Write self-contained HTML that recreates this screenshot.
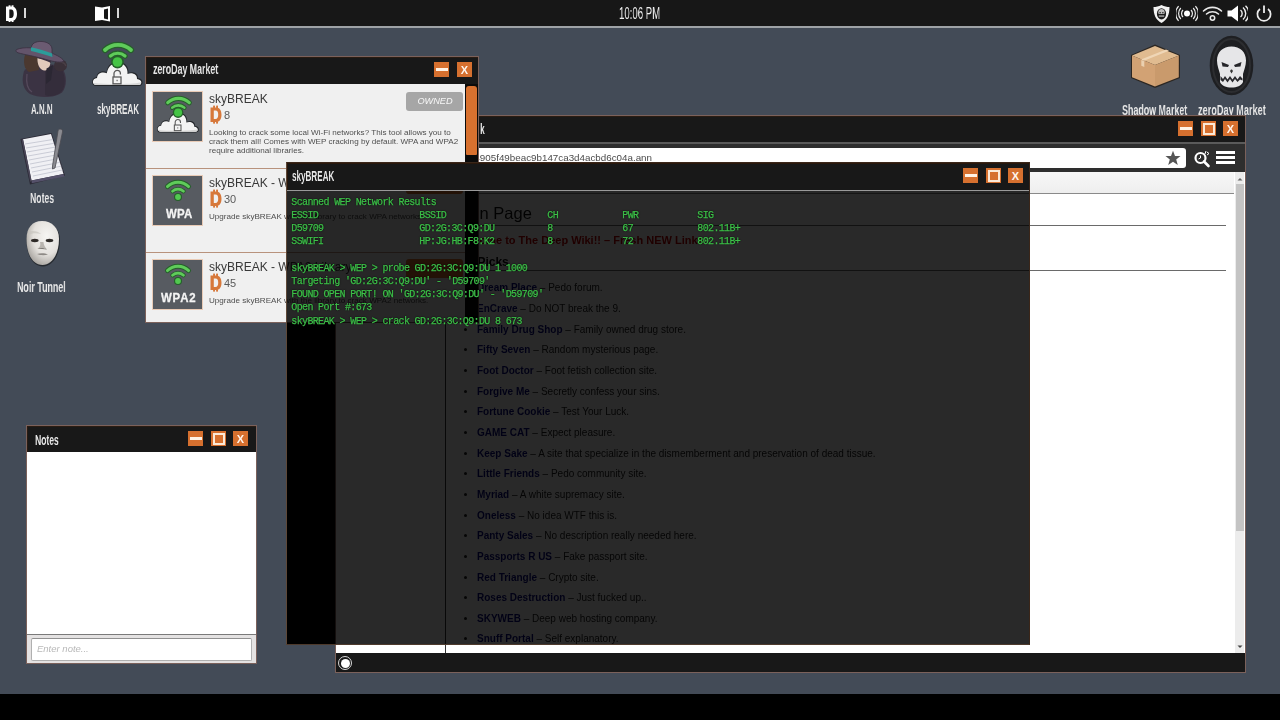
<!DOCTYPE html>
<html><head><meta charset="utf-8">
<style>
*,*::before,*::after{margin:0;padding:0;box-sizing:border-box}
html,body{width:1280px;height:720px;overflow:hidden;background:#000;font-family:"Liberation Sans",sans-serif}
.a{position:absolute}
#desk{position:absolute;left:0;top:28px;width:1280px;height:666px;background:#434b57}
#top{position:absolute;left:0;top:0;width:1280px;height:26px;background:#171717}
#topline{position:absolute;left:0;top:26px;width:1280px;height:2px;background:#9ea2a6}
.cd{position:absolute;white-space:nowrap;transform-origin:0 0;will-change:transform;color:#e8e8e8;line-height:1;font-weight:bold}
.win{position:absolute;border:1px solid #7b615b;background:#181818}
.tb{position:absolute;left:0;top:0;right:0;background:#181818;box-shadow:inset 0 1px 0 #2a1c12,inset 1px 0 0 #2a1c12}
.btn{position:absolute;width:15px;height:15px;background:#d6702f}
.btn.min::after{content:"";position:absolute;left:1.5px;top:6px;width:12px;height:3px;background:#fff3e6}
.btn.max::after{content:"";position:absolute;left:1.5px;top:1.5px;width:12px;height:12px;border:2px solid #fbe9d8}
.btn.cls::after{content:"X";position:absolute;left:0;top:1.5px;width:15px;text-align:center;font:bold 11px/13px "Liberation Sans",sans-serif;color:#fff6ee}

.zi{position:absolute;left:0;width:319px;height:85px;border-bottom:1px solid #b8927c}
.ibox{position:absolute;left:7px;top:8px;width:49px;height:49px;background:#575b61;box-shadow:0 0 0 1px #e9cbb6}
.ititle{position:absolute;left:63px;top:8px;font-size:12px;line-height:14px;color:#383838;white-space:nowrap}
.iprice{position:absolute;left:78px;top:23.5px;font-size:11px;line-height:14px;color:#5a5a5a}
.idesc{position:absolute;left:63px;top:44px;width:260px;font-size:8.1px;line-height:9px;color:#4e4e4e}
.bbtn{position:absolute;left:260px;top:7px;width:57px;height:19px;border-radius:3px;background:#d8712f}

.li{position:absolute;left:141px;font-size:10px;line-height:12px;color:#222;white-space:nowrap}
.li b{color:#0b0b80}
.li::before{content:"";position:absolute;left:-13px;top:4px;width:3px;height:3px;border-radius:2px;background:#222}
.tl{position:absolute;font:10px/12px "Liberation Mono",monospace;letter-spacing:-0.64px;color:#3ec04a;-webkit-text-stroke:0.25px #3ec04a;text-shadow:0 0 1.5px #000,0 0 1px #000;white-space:pre}
.win{will-change:transform}</style></head><body>
<div id="desk"></div>
<div id="top"></div>
<div id="topline"></div>

<!-- TOP BAR -->
<svg class="a" style="left:0;top:0" width="22" height="26" viewBox="0 0 22 26">
 <path d="M6 6.5 H11.5 C15 6.5 17 9.3 17 13.7 C17 18.1 15 21 11.5 21 H6 Z M9.3 9.6 V17.9 H11 C12.9 17.9 13.7 16.3 13.7 13.7 C13.7 11.1 12.9 9.6 11 9.6 Z" fill="#fff" fill-rule="evenodd"/>
 <rect x="8.6" y="5.3" width="1.9" height="1.8" fill="#fff"/><rect x="11.6" y="5.3" width="1.9" height="1.8" fill="#fff"/>
 <rect x="8.6" y="20.4" width="1.9" height="1.6" fill="#fff"/><rect x="11.6" y="20.4" width="1.9" height="1.6" fill="#fff"/>
</svg>
<div class="a" style="left:24px;top:8px;width:1.6px;height:10px;background:#d8d8d8"></div>
<svg class="a" style="left:95px;top:5px" width="16" height="17" viewBox="0 0 16 17">
 <path d="M0 1.5 L7 2.5 L7 15 L0 16z" fill="#fff"/>
 <path d="M7 2.5 L15 1 L15 16.5 L7 15z M9 4.5v9l4 1V3.5z" fill="#fff" fill-rule="evenodd"/>
</svg>
<div class="a" style="left:117px;top:8px;width:1.6px;height:10px;background:#d8d8d8"></div>
<div class="cd" style="left:619px;top:6px;font-size:16px;font-weight:normal;transform:scaleX(.6);color:#f0f0f0">10:06 PM</div>
<!-- right tray -->
<svg class="a" style="left:1152px;top:4px" width="19" height="20" viewBox="0 0 19 20">
 <path d="M9.5 1 C12.5 2.5 15 3 17.5 3 C17.5 11 15 16 9.5 19 C4 16 1.5 11 1.5 3 C4 3 6.5 2.5 9.5 1z" fill="#f2f2f2"/>
 <ellipse cx="9.5" cy="9.8" rx="4.6" ry="5.6" fill="#1c1c1c"/>
 <path d="M6.3 8.2 C6.3 6 7.7 4.9 9.5 4.9 C11.3 4.9 12.7 6 12.7 8.2 L12.4 10 L6.6 10z" fill="#bdbdbd"/>
 <rect x="6.8" y="11.3" width="5.4" height="1.6" fill="#9a9a9a"/>
 <rect x="7.4" y="8.2" width="1.5" height="1.1" fill="#222"/><rect x="10.1" y="8.2" width="1.5" height="1.1" fill="#222"/>
</svg>
<svg class="a" style="left:1176px;top:5px" width="22" height="17" viewBox="0 0 22 17">
 <circle cx="11" cy="8.5" r="3" fill="#fff"/>
 <g fill="none" stroke="#ececec" stroke-width="1.2">
 <path d="M7 5 A5 5 0 0 0 7 12"/><path d="M15 5 A5 5 0 0 1 15 12"/>
 <path d="M4.8 3 A8 8 0 0 0 4.8 14"/><path d="M17.2 3 A8 8 0 0 1 17.2 14"/>
 <path d="M2.6 1.2 A10.5 10.5 0 0 0 2.6 15.8"/><path d="M19.4 1.2 A10.5 10.5 0 0 1 19.4 15.8"/>
 </g>
</svg>
<svg class="a" style="left:1202px;top:6px" width="21" height="15" viewBox="0 0 21 15">
 <g fill="none" stroke="#e8e8e8" stroke-width="1.6" stroke-linecap="round">
 <path d="M1.5 5 A13 13 0 0 1 19.5 5"/><path d="M4.5 8 A9 9 0 0 1 16.5 8"/>
 </g>
 <circle cx="10.5" cy="12" r="2.2" fill="none" stroke="#e8e8e8" stroke-width="1.5"/>
</svg>
<svg class="a" style="left:1227px;top:5px" width="21" height="17" viewBox="0 0 21 17">
 <path d="M0.5 5.5h4L11 0.5v16L4.5 11.5h-4z" fill="#fff"/>
 <g fill="none" stroke="#f0f0f0" stroke-width="1.4">
 <path d="M13.5 5 A4.5 4.5 0 0 1 13.5 12"/><path d="M16 2.5 A8 8 0 0 1 16 14.5"/><path d="M18.5 0.8 A10.5 10.5 0 0 1 18.5 16.2"/>
 </g>
</svg>
<svg class="a" style="left:1255px;top:5px" width="18" height="17" viewBox="0 0 18 17">
 <path d="M5 4 A6.6 6.6 0 1 0 13 4" fill="none" stroke="#ececec" stroke-width="1.7"/>
 <rect x="8.1" y="0.5" width="1.8" height="7.5" fill="#ececec"/>
</svg>

<!-- DESKTOP ICONS -->
<svg width="0" height="0" style="position:absolute">
 <defs>
  <symbol id="wc" viewBox="0 0 64 56">
   <path d="M19 14 A19 19 0 0 1 45 14" fill="none" stroke="#25602a" stroke-width="6.2" stroke-linecap="round"/>
   <path d="M19 14 A19 19 0 0 1 45 14" fill="none" stroke="#5fcb5a" stroke-width="3.8" stroke-linecap="round"/>
   <path d="M24.5 20 A11 11 0 0 1 39 20" fill="none" stroke="#25602a" stroke-width="5.6" stroke-linecap="round"/>
   <path d="M24.5 20 A11 11 0 0 1 39 20" fill="none" stroke="#5fcb5a" stroke-width="3.2" stroke-linecap="round"/>
   <path d="M10 50 C5 50 4.5 42 10.5 41 C11 36 16.5 34 20.5 36 C21.5 28.5 27 25 32.5 25.5 C39 26 43 31 42.5 37 C46.5 35 52.5 37 52 42 C58 42.5 58 50 53 50 Z" fill="#25282c"/>
   <path d="M10 49 C6 49 5.5 42.5 11 42 C11.5 37 16.5 35.5 20.8 37.3 C22 30 27 26.5 32.5 27 C38.5 27.5 42 32 41.5 38 C45.5 36 51.5 38 51 43 C56.5 43.5 56.5 49 52.5 49 Z" fill="#f3f3f3"/>
   <path d="M8 47 C20 48.5 44 48.5 55 46.5 C55 48.5 54 49 52.5 49 L10 49 C8.5 49 8 48 8 47z" fill="#d4d4d4"/>
   <circle cx="31.5" cy="26" r="6.4" fill="#25602a"/><circle cx="31.5" cy="26" r="4.8" fill="#45c445"/>
   <path d="M28 41 v-3.4 a3.2 3.2 0 0 1 6.4 0 v1" fill="none" stroke="#5a5a5a" stroke-width="1.3"/>
   <rect x="27" y="41" width="8" height="6.8" fill="none" stroke="#5a5a5a" stroke-width="1.3"/>
   <rect x="30.5" y="43.8" width="1.2" height="1.4" fill="#666"/>
  </symbol>
 </defs>
</svg>
<svg class="a" style="left:10px;top:34px" width="64" height="64" viewBox="0 0 64 64">
 <path d="M14 37 C11 47 13 56 20 60 C29 64.5 45 64 52 58.5 C57.5 52 57 41 52 33.5 C45 28.5 21 29 14 37 Z" fill="#3b3343"/>
 <path d="M35 33 C43 31 51 32 53 38 C56 46 55 55 50 59 C45 62.5 38 62.5 35 61 Z" fill="#342d3b"/>
 <path d="M17 40 C16 48 17 55 22 58" fill="none" stroke="#554a5c" stroke-width="1.2"/>
 <path d="M15 21 C13 28 14 35 19 38 L29 36 L28 22 Z" fill="#4b382f"/>
 <path d="M27.5 24 C27 30 29.5 35.5 34 36.5 C37 37 39 34 40 31 L40.5 26 Z" fill="#e2cabb"/>
 <path d="M27 24 C32 25 37 27 41 29 L41 26 L28 22 Z" fill="#3a3040"/>
 <path d="M36.5 34.5 L43 31 L41 46 L36 50 Z" fill="#2b2733"/>
 <ellipse cx="50.5" cy="31.5" rx="6.5" ry="6" fill="#3a3038"/>
 <path d="M46 28 C50 27 55 28.5 56 32" fill="none" stroke="#4a3f46" stroke-width="1.5"/>
 <path d="M6.5 15.5 C14 12.5 26 13.5 36 17 C45 20 52 23.5 54 27 C52 29 44 28 36 25.5 C26 22.5 14 20.5 8 18.8 C6 18.2 5.5 16.5 6.5 15.5 Z" fill="#63546b" stroke="#3a3040" stroke-width="0.8"/>
 <path d="M21.5 14 C21 9.5 26 7 32 7.5 C38 8 42 11 42 15.5 L42 21.5 C35 19 28 17 21.5 15.5 Z" fill="#6b5b72" stroke="#3a3040" stroke-width="0.8"/>
 <path d="M21 13.2 C28 14.7 36 17 42.3 19.6 L42.3 23 C35 20.5 28 18.6 21 17 Z" fill="#2b9c9a"/>
</svg>
<svg class="a" style="left:86px;top:36px" width="64" height="56"><use href="#wc"/></svg>
<svg class="a" style="left:14px;top:124px" width="56" height="64" viewBox="0 0 56 64">
 <path d="M6.5 15 L37.5 9 L51 51.5 L16 60.5 Z" fill="#2a2834"/>
 <path d="M9 15.2 L37 10 L49.5 50 L17.5 56.5 Z" fill="#f0f0f4"/>
 <path d="M17.5 56.5 L49.5 50 L50.5 52.5 L17.8 59.2z" fill="#55516a"/>
 <path d="M7.5 15.5 L9 15.2 L17.5 56.5 L16.2 58z" fill="#4a4658"/>
 <g stroke="#b9bcc8" stroke-width="0.7">
  <path d="M11 20 L39 15.5"/><path d="M12 24 L40.2 19.3"/><path d="M13 28 L41.4 23.1"/><path d="M14 32 L42.6 26.9"/><path d="M15 36 L43.8 30.7"/><path d="M16 40 L45 34.5"/><path d="M17 44 L46.2 38.3"/><path d="M18 48 L47.4 42.1"/><path d="M19 52 L48.6 45.9"/>
 </g>
 <path d="M46 5 C48 5 49 6.5 48.5 8 L41 44 L38.5 45 L38.5 42 L44 7 C44.3 5.8 45 5 46 5z" fill="#8a8a90" stroke="#4a4a50" stroke-width="0.8"/>
</svg>
<svg class="a" style="left:18px;top:214px" width="48" height="58" viewBox="0 0 48 58">
 <defs><radialGradient id="mg" cx="0.62" cy="0.35" r="0.75"><stop offset="0" stop-color="#f6f5f3"/><stop offset="0.55" stop-color="#e4e1dd"/><stop offset="1" stop-color="#9c9893"/></radialGradient></defs>
 <path d="M24 7 C34 7 41.5 14 41.5 25 C41.5 40 34 51.5 24.5 51.5 C14 51.5 8 40 8 25 C8 14 14 7 24 7z" fill="#262a30" transform="translate(0.5,1)"/>
 <path d="M24 7 C34 7 41 14 41 25 C41 40 34 51 24.5 51 C14.5 51 8.5 40 8.5 25 C8.5 14 14 7 24 7z" fill="url(#mg)"/>
 <path d="M10 18 C14 16 20 17 23 20 C19 19 14 19 10 21z" fill="#c8c4bf" opacity="0.7"/>
 <ellipse cx="16.8" cy="26.5" rx="3.8" ry="1.7" fill="#2e2a28"/>
 <ellipse cx="31.5" cy="26.5" rx="3.8" ry="1.7" fill="#2e2a28"/>
 <path d="M22 28 C23 31 22 33 19.5 35 C23 34 26 34 29 35.5 C27 33 25.5 31 25.5 28z" fill="#b9b5b0"/>
 <path d="M19.5 35 C22 33.5 26 33.5 29 35.5 C26 35 22 35 19.5 35z" fill="#7e7a76"/>
 <path d="M19 40 C22 39 27 39 30 40.5 C27 41.5 22 41.5 19 40z" fill="#8e8a86"/>
</svg>
<svg class="a" style="left:1124px;top:32px" width="64" height="64" viewBox="0 0 64 64">
 <path d="M31 12.5 L56 23 L56 46 L31 56 L7 46 L7 23 Z" fill="#2b2622"/>
 <path d="M31 14 L54.8 23.6 L31 33 L8 23.6 Z" fill="#e0bb90"/>
 <path d="M8 23.6 L31 33 L31 54.5 L8 45.2 Z" fill="#d2a274"/>
 <path d="M31 33 L54.8 23.6 L54.8 45.2 L31 54.5 Z" fill="#c99a6c"/>
 <path d="M17 27.5 L42 17.5 L45 18.7 L20 28.7 Z" fill="#efd6b6"/>
 <path d="M17.3 28 L20.3 29.2 L20.3 35 L17.3 33.8 Z" fill="#ead0b0"/>
</svg>
<svg class="a" style="left:1202px;top:30px" width="60" height="70" viewBox="0 0 60 70">
 <ellipse cx="29.5" cy="35.5" rx="21.8" ry="29.8" fill="#1e1f22"/>
 <ellipse cx="29.5" cy="35.5" rx="18.5" ry="26.5" fill="none" stroke="#2c2d30" stroke-width="2"/>
 <path d="M29.5 16.5 C38 16.5 44 22 44 30.5 C44 36 42 40 41 44 L41 52 C39 56 35 57.5 29.5 57.5 C24 57.5 20 56 18 52 L18 44 C17 40 15 36 15 30.5 C15 22 21 16.5 29.5 16.5z" fill="#e6e6e8"/>
 <path d="M19.5 32 L27 35 L26 37 L20.5 36.5 Z" fill="#26262a"/>
 <path d="M39.5 32 L32 35 L33 37 L38.5 36.5 Z" fill="#26262a"/>
 <path d="M28 41 L29.5 43.5 L31 41 L30 39.5 L29 39.5z" fill="#333"/>
 <path d="M18.5 46 L21 49 L23 46 L25.5 49.5 L28 46 L30.5 49.5 L33 46 L35.5 49.5 L38 46 L40.5 48.5 L40.5 50.5 L38 49.5 L35.5 52 L33 49 L30.5 52.5 L28 49 L25.5 52.5 L23 49 L21 52 L18.5 50z" fill="#2a2a2e"/>
</svg>
<div class="cd" style="left:31px;top:101.5px;font-size:14px;transform:scaleX(.565)">A.N.N</div>
<div class="cd" style="left:97px;top:102px;font-size:14px;transform:scaleX(.575)">skyBREAK</div>
<div class="cd" style="left:29.5px;top:191px;font-size:14px;transform:scaleX(.62)">Notes</div>
<div class="cd" style="left:17px;top:279.5px;font-size:14px;transform:scaleX(.635)">Noir Tunnel</div>
<div class="cd" style="left:1122px;top:102.8px;font-size:14px;transform:scaleX(.635)">Shadow Market</div>
<div class="cd" style="left:1197.5px;top:102.8px;font-size:14px;transform:scaleX(.655)">zeroDay Market</div>

<!-- NOTES WINDOW -->
<div class="win" style="left:26px;top:425px;width:231px;height:239px">
  <div class="tb" style="height:26px"></div>
  <div class="cd" style="left:8px;top:6px;font-size:15px;transform:scaleX(.57)">Notes</div>
  <div class="btn min" style="left:161px;top:5px"></div>
  <div class="btn max" style="left:184px;top:5px"></div>
  <div class="btn cls" style="left:206px;top:5px"></div>
  <div class="a" style="left:0;top:26px;width:229px;height:182px;background:#fff"></div>
  <div class="a" style="left:0;top:208px;width:229px;height:29px;background:#e4e2e2;border-top:1px solid #7a7a7a"></div>
  <div class="a" style="left:4px;top:212px;width:221px;height:23px;background:#fff;border:1px solid #b0b0b0;border-top-color:#909090;border-radius:2px"></div>
  <div class="a" style="left:10px;top:217px;font-size:9.5px;line-height:12px;font-style:italic;color:#b8b8b8">Enter note...</div>
</div>


<!-- BROWSER WINDOW -->
<div class="win" style="left:335px;top:115px;width:911px;height:558px;overflow:hidden">
  <div class="tb" style="height:26px"></div>
  <div class="cd" style="left:144px;top:6px;font-size:14px;transform:scaleX(.6)">k</div>
  <div class="btn min" style="left:842px;top:5px"></div>
  <div class="btn max" style="left:865px;top:5px"></div>
  <div class="btn cls" style="left:887px;top:5px"></div>
  <div class="a" style="left:0;top:26px;width:909px;height:2px;background:#5a5a5a"></div>
  <div class="a" style="left:0;top:28px;width:909px;height:28px;background:#2e2e2e"></div>
  <div class="a" style="left:6px;top:32px;width:844px;height:20px;background:#fff;border-radius:3px"></div>
  <div class="a" style="left:0;top:35px;width:316px;overflow:hidden;text-align:right;font-size:9.8px;line-height:14px;color:#4a4a4a;white-space:nowrap">deepwiki.e8b3c2d1a7f6e4905f49beac9b147ca3d4acbd6c04a.ann</div>
  <svg class="a" style="left:829px;top:34px" width="16" height="16" viewBox="0 0 16 16"><path d="M8 0.8 L10 6 L15.5 6.1 L11.2 9.5 L12.8 15 L8 11.8 L3.2 15 L4.8 9.5 L0.5 6.1 L6 6z" fill="#555"/></svg>
  <svg class="a" style="left:857px;top:33px" width="19" height="19" viewBox="0 0 19 19">
   <circle cx="7.5" cy="9" r="5" fill="none" stroke="#fff" stroke-width="2.2"/>
   <path d="M11 12.5 L15.5 17" stroke="#fff" stroke-width="2.6" stroke-linecap="round"/>
   <path d="M7.5 6.5 V9 L5.5 10" fill="none" stroke="#fff" stroke-width="1"/>
   <path d="M13 2 L12 5 M14 3 L16 4.5 L14 6" fill="none" stroke="#fff" stroke-width="1"/>
  </svg>
  <div class="a" style="left:880px;top:35px;width:19px;height:3px;background:#fff"></div>
  <div class="a" style="left:880px;top:40px;width:19px;height:3px;background:#fff"></div>
  <div class="a" style="left:880px;top:45px;width:19px;height:3px;background:#fff"></div>
  <!-- page -->
  <div class="a" style="left:0;top:56px;width:909px;height:481px;background:#fff;overflow:hidden">
    <div class="a" style="left:0;top:0;width:898px;height:22px;background:linear-gradient(#f7f7f7,#eeeeee);border-bottom:1px solid #8a8a8a"></div>
    <div class="a" style="left:109px;top:23px;width:1px;height:460px;background:#333"></div>
    <div class="a" style="left:117px;top:32px;font-size:16.5px;line-height:18px;color:#111;white-space:nowrap">Main Page</div>
    <div class="a" style="left:120px;top:53px;width:770px;height:1px;background:#6a6a6a"></div>
    <div class="a" style="left:118px;top:61px;font-weight:bold;font-size:11px;line-height:14px;color:#c00000;white-space:nowrap">Welcome to The Deep Wiki!! – Fresh NEW Links</div>
    <div class="a" style="left:117px;top:83px;font-weight:bold;font-size:12px;line-height:14px;color:#111;white-space:nowrap">Top Picks</div>
    <div class="a" style="left:120px;top:98px;width:770px;height:1px;background:#6a6a6a"></div>
    <div class="li" style="top:110.4px"><b>Dream Place</b> – Pedo forum.</div>
<div class="li" style="top:131.0px"><b>EnCrave</b> – Do NOT break the 9.</div>
<div class="li" style="top:151.7px"><b>Family Drug Shop</b> – Family owned drug store.</div>
<div class="li" style="top:172.3px"><b>Fifty Seven</b> – Random mysterious page.</div>
<div class="li" style="top:192.9px"><b>Foot Doctor</b> – Foot fetish collection site.</div>
<div class="li" style="top:213.6px"><b>Forgive Me</b> – Secretly confess your sins.</div>
<div class="li" style="top:234.2px"><b>Fortune Cookie</b> – Test Your Luck.</div>
<div class="li" style="top:254.9px"><b>GAME CAT</b> – Expect pleasure.</div>
<div class="li" style="top:275.6px"><b>Keep Sake</b> – A site that specialize in the dismemberment and preservation of dead tissue.</div>
<div class="li" style="top:296.2px"><b>Little Friends</b> – Pedo community site.</div>
<div class="li" style="top:316.9px"><b>Myriad</b> – A white supremacy site.</div>
<div class="li" style="top:337.5px"><b>Oneless</b> – No idea WTF this is.</div>
<div class="li" style="top:358.1px"><b>Panty Sales</b> – No description really needed here.</div>
<div class="li" style="top:378.8px"><b>Passports R US</b> – Fake passport site.</div>
<div class="li" style="top:399.5px"><b>Red Triangle</b> – Crypto site.</div>
<div class="li" style="top:420.1px"><b>Roses Destruction</b> – Just fucked up..</div>
<div class="li" style="top:440.8px"><b>SKYWEB</b> – Deep web hosting company.</div>
<div class="li" style="top:461.4px"><b>Snuff Portal</b> – Self explanatory.</div>

    <div class="a" style="left:899px;top:0;width:9px;height:481px;background:#ececec"></div>
    <div class="a" style="left:900px;top:12px;width:8px;height:347px;background:#c4c4c4"></div>
    <svg class="a" style="left:900px;top:4px" width="8" height="6"><path d="M1.5 4.5 L4 2 L6.5 4.5" fill="#666"/></svg>
    <svg class="a" style="left:900px;top:472px" width="8" height="6"><path d="M1.5 1.5 L4 4 L6.5 1.5" fill="#444"/></svg>
  </div>
  <div class="a" style="left:0;top:537px;width:909px;height:19px;background:#181818"></div>
  <div class="a" style="left:2px;top:540px;width:14px;height:14px;border-radius:50%;border:1.5px solid #d8d8d8"></div>
  <div class="a" style="left:4.5px;top:542.5px;width:9px;height:9px;border-radius:50%;background:#fff"></div>
</div>

<!-- ZERODAY MARKET WINDOW -->
<div class="win" style="left:145px;top:56px;width:334px;height:267px;overflow:hidden">
  <div class="tb" style="height:27px"></div>
  <div class="cd" style="left:7px;top:5px;font-size:14px;transform:scaleX(.63)">zeroDay Market</div>
  <div class="btn min" style="left:288px;top:5px"></div>
  <div class="btn cls" style="left:311px;top:5px"></div>
  <div class="a" style="left:0;top:27px;width:319px;height:238px;background:#f0f0f0;overflow:hidden">
    <div class="zi" style="top:0">
      <div class="ibox"><svg class="a" style="left:-1px;top:-1px" width="53" height="46.5" viewBox="0 0 64 56"><use href="#wc"/></svg></div>
      <div class="ititle">skyBREAK</div>
      <svg class="a" style="left:63px;top:21px" width="14" height="19" viewBox="5 4 13 19"><path d="M6 6.5 H11.5 C15 6.5 17 9.3 17 13.7 C17 18.1 15 21 11.5 21 H6 Z M9.3 9.6 V17.9 H11 C12.9 17.9 13.7 16.3 13.7 13.7 C13.7 11.1 12.9 9.6 11 9.6 Z" fill="#d7783a" fill-rule="evenodd"/><rect x="8.6" y="4.6" width="1.9" height="2.5" fill="#d7783a"/><rect x="11.6" y="4.6" width="1.9" height="2.5" fill="#d7783a"/><rect x="8.6" y="20.4" width="1.9" height="2.2" fill="#d7783a"/><rect x="11.6" y="20.4" width="1.9" height="2.2" fill="#d7783a"/></svg>
      <div class="iprice">8</div>
      <div class="idesc">Looking to crack some local Wi-Fi networks? This tool allows you to crack them all! Comes with WEP cracking by default. WPA and WPA2 require additional libraries.</div>
      <div class="a" style="left:260px;top:7.5px;width:57px;height:19px;border-radius:3px;background:#a6a6a6;color:#f8f8f8;font:italic 9.2px/19px 'Liberation Sans',sans-serif;text-align:center;padding-left:1px">OWNED</div>
    </div>
    <div class="zi" style="top:84px">
      <div class="ibox"><svg class="a" style="left:0;top:0" width="50" height="50" viewBox="0 0 50 50">
<path d="M14.5 10.5 A15 15 0 0 1 35.5 10.5" fill="none" stroke="#25602a" stroke-width="5" stroke-linecap="round"/>
<path d="M14.5 10.5 A15 15 0 0 1 35.5 10.5" fill="none" stroke="#5fcb5a" stroke-width="3.1" stroke-linecap="round"/>
<path d="M19.5 15.2 A8.5 8.5 0 0 1 30.5 15.2" fill="none" stroke="#25602a" stroke-width="4.4" stroke-linecap="round"/>
<path d="M19.5 15.2 A8.5 8.5 0 0 1 30.5 15.2" fill="none" stroke="#5fcb5a" stroke-width="2.7" stroke-linecap="round"/>
<circle cx="25" cy="21" r="4" fill="#25602a"/><circle cx="25" cy="21" r="2.9" fill="#52c850"/>
</svg><div class="a" style="left:13px;top:31px;font:bold 13px/14px 'Liberation Sans',sans-serif;color:#f4f4f4;-webkit-text-stroke:0.3px #f4f4f4;transform:scaleX(0.88);transform-origin:0 0;white-space:nowrap;letter-spacing:0.3px">WPA</div></div>
      <div class="ititle">skyBREAK - WPA Library</div>
      <svg class="a" style="left:63px;top:21px" width="14" height="19" viewBox="5 4 13 19"><path d="M6 6.5 H11.5 C15 6.5 17 9.3 17 13.7 C17 18.1 15 21 11.5 21 H6 Z M9.3 9.6 V17.9 H11 C12.9 17.9 13.7 16.3 13.7 13.7 C13.7 11.1 12.9 9.6 11 9.6 Z" fill="#d7783a" fill-rule="evenodd"/><rect x="8.6" y="4.6" width="1.9" height="2.5" fill="#d7783a"/><rect x="11.6" y="4.6" width="1.9" height="2.5" fill="#d7783a"/><rect x="8.6" y="20.4" width="1.9" height="2.2" fill="#d7783a"/><rect x="11.6" y="20.4" width="1.9" height="2.2" fill="#d7783a"/></svg>
      <div class="iprice">30</div>
      <div class="idesc" style="width:300px;white-space:nowrap">Upgrade skyBREAK with the library to crack WPA networks.</div>
      <div class="bbtn"></div>
    </div>
    <div class="zi" style="top:168px">
      <div class="ibox"><svg class="a" style="left:0;top:0" width="50" height="50" viewBox="0 0 50 50">
<path d="M14.5 10.5 A15 15 0 0 1 35.5 10.5" fill="none" stroke="#25602a" stroke-width="5" stroke-linecap="round"/>
<path d="M14.5 10.5 A15 15 0 0 1 35.5 10.5" fill="none" stroke="#5fcb5a" stroke-width="3.1" stroke-linecap="round"/>
<path d="M19.5 15.2 A8.5 8.5 0 0 1 30.5 15.2" fill="none" stroke="#25602a" stroke-width="4.4" stroke-linecap="round"/>
<path d="M19.5 15.2 A8.5 8.5 0 0 1 30.5 15.2" fill="none" stroke="#5fcb5a" stroke-width="2.7" stroke-linecap="round"/>
<circle cx="25" cy="21" r="4" fill="#25602a"/><circle cx="25" cy="21" r="2.9" fill="#52c850"/>
</svg><div class="a" style="left:8px;top:31px;font:bold 13px/14px 'Liberation Sans',sans-serif;color:#f4f4f4;-webkit-text-stroke:0.3px #f4f4f4;transform:scaleX(0.88);transform-origin:0 0;white-space:nowrap;letter-spacing:0.9px">WPA2</div></div>
      <div class="ititle">skyBREAK - WPA2 Library</div>
      <svg class="a" style="left:63px;top:21px" width="14" height="19" viewBox="5 4 13 19"><path d="M6 6.5 H11.5 C15 6.5 17 9.3 17 13.7 C17 18.1 15 21 11.5 21 H6 Z M9.3 9.6 V17.9 H11 C12.9 17.9 13.7 16.3 13.7 13.7 C13.7 11.1 12.9 9.6 11 9.6 Z" fill="#d7783a" fill-rule="evenodd"/><rect x="8.6" y="4.6" width="1.9" height="2.5" fill="#d7783a"/><rect x="11.6" y="4.6" width="1.9" height="2.5" fill="#d7783a"/><rect x="8.6" y="20.4" width="1.9" height="2.2" fill="#d7783a"/><rect x="11.6" y="20.4" width="1.9" height="2.2" fill="#d7783a"/></svg>
      <div class="iprice">45</div>
      <div class="idesc" style="width:300px;white-space:nowrap">Upgrade skyBREAK with the library to crack WPA2 networks.</div>
      <div class="bbtn"></div>
    </div>
  </div>
  <div class="a" style="left:319px;top:27px;width:13px;height:238px;background:#0b0b0b"></div>
  <div class="a" style="left:320px;top:29px;width:11px;height:69px;background:#d8712f;border-radius:3px 3px 1px 1px"></div>
</div>

<!-- TERMINAL WINDOW -->
<div class="a" style="left:286px;top:162px;width:744px;height:483px;border:1px solid #3a2619;border-left-color:#5e4838;border-bottom-color:#4e3a2c">
  <div class="a" style="left:0;top:0;width:742px;height:27px;background:#181818;box-shadow:inset 0 1px 0 #2a180c,inset 1px 0 0 #2a180c"></div>
  <div class="a" style="left:0;top:27px;width:742px;height:1px;background:#9a9a9a"></div>
  <div class="a" style="left:0;top:28px;width:742px;height:453px;background:rgba(0,0,0,.84)"></div>
  <div class="a" style="left:0;top:160px;width:48px;height:321px;background:#000"></div>
  <div class="cd" style="left:5px;top:5px;font-size:15px;transform:scaleX(.54)">skyBREAK</div>
  <div class="btn min" style="left:676px;top:5px"></div>
  <div class="btn max" style="left:699px;top:5px"></div>
  <div class="btn cls" style="left:721px;top:5px"></div>
<div class="tl" style="left:4.3px;top:33.8px">Scanned WEP Network Results</div>
<div class="tl" style="left:4.3px;top:47.0px">ESSID</div>
<div class="tl" style="left:132.3px;top:47.0px">BSSID</div>
<div class="tl" style="left:260.3px;top:47.0px">CH</div>
<div class="tl" style="left:335.3px;top:47.0px">PWR</div>
<div class="tl" style="left:410.3px;top:47.0px">SIG</div>
<div class="tl" style="left:4.3px;top:60.2px">D59709</div>
<div class="tl" style="left:132.3px;top:60.2px">GD:2G:3C:Q9:DU</div>
<div class="tl" style="left:260.3px;top:60.2px">8</div>
<div class="tl" style="left:335.3px;top:60.2px">67</div>
<div class="tl" style="left:410.3px;top:60.2px">802.11B+</div>
<div class="tl" style="left:4.3px;top:73.4px">SSWIFI</div>
<div class="tl" style="left:132.3px;top:73.4px">HP:JG:HB:F8:K2</div>
<div class="tl" style="left:260.3px;top:73.4px">8</div>
<div class="tl" style="left:335.3px;top:73.4px">72</div>
<div class="tl" style="left:410.3px;top:73.4px">802.11B+</div>
<div class="tl" style="left:4.3px;top:99.8px">skyBREAK &gt; WEP &gt; probe GD:2G:3C:Q9:DU 1 1000</div>
<div class="tl" style="left:4.3px;top:113.0px">Targeting 'GD:2G:3C:Q9:DU' - 'D59709'</div>
<div class="tl" style="left:4.3px;top:126.2px">FOUND OPEN PORT! ON 'GD:2G:3C:Q9:DU' - 'D59709'</div>
<div class="tl" style="left:4.3px;top:139.4px">Open Port #:673</div>
<div class="tl" style="left:4.3px;top:152.6px">skyBREAK &gt; WEP &gt; crack GD:2G:3C:Q9:DU 8 673</div>
</div>
</body></html>
